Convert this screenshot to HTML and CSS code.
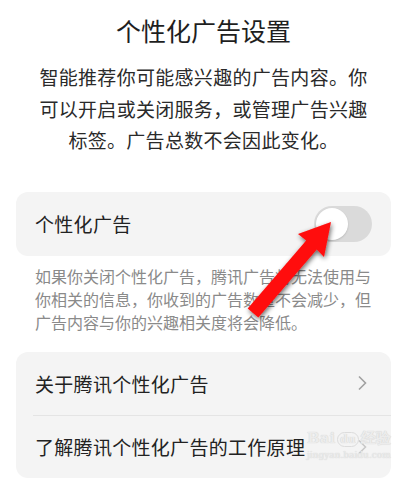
FILE: index.html
```html
<!DOCTYPE html>
<html lang="zh">
<head>
<meta charset="utf-8">
<link rel="stylesheet" href="styles.css">
</head>
<body>
<div class="page">
  <h1 class="title">个性化广告设置</h1>
  <p class="intro">智能推荐你可能感兴趣的广告内容。你可以开启或关闭服务，或管理广告兴趣标签。广告总数不会因此变化。</p>

  <div class="card">
    <div class="row">
      <span class="label">个性化广告</span>
      <span class="switch"><span class="thumb"></span></span>
    </div>
  </div>
  <p class="desc">如果你关闭个性化广告，腾讯广告将无法使用与你相关的信息，你收到的广告数量不会减少，但广告内容与你的兴趣相关度将会降低。</p>

  <div class="card card-list">
    <div class="row row-link">
      <span class="label">关于腾讯个性化广告</span>
      <svg class="chev" width="10" height="16" viewBox="0 0 10 16"><path d="M2 1.5 L8.5 8 L2 14.5" fill="none" stroke="#a0a0a0" stroke-width="1.6"/></svg>
    </div>
    <div class="row row-link">
      <span class="label">了解腾讯个性化广告的工作原理</span>
      <svg class="chev" width="10" height="16" viewBox="0 0 10 16"><path d="M2 1.5 L8.5 8 L2 14.5" fill="none" stroke="#c8c8c8" stroke-width="1.6"/></svg>
    </div>
  </div>

  <div class="watermark">
    <span class="wm-logo">Bai<span class="wm-du">du</span>经验</span>
    <span class="wm-url">jingyan.baidu.com</span>
  </div>

  <svg class="arrow" width="407" height="481" viewBox="0 0 407 481">
    <defs>
      <filter id="sh" x="-20%" y="-20%" width="140%" height="140%">
        <feGaussianBlur in="SourceAlpha" stdDeviation="2.5"/>
        <feOffset dx="1" dy="2" result="b"/>
        <feComponentTransfer><feFuncA type="linear" slope="0.6"/></feComponentTransfer>
        <feMerge><feMergeNode/><feMergeNode in="SourceGraphic"/></feMerge>
      </filter>
    </defs>
    <polygon filter="url(#sh)" fill="#ff0a0a" points="331,222 324,257 316.8,249.5 258.3,317.5 247.7,308.5 306.2,240.5 298,234"/>
  </svg>
</div>
</body>
</html>
```
FILE: styles.css
```css
* { box-sizing: border-box; }
html, body { margin: 0; padding: 0; background: #fff; }
body {
  font-family: "Noto Sans CJK SC", "Noto Sans", sans-serif;
  color: #222;
}
.page {
  position: relative;
  width: 407px;
  height: 481px;
  overflow: hidden;
  padding: 12px 16px 0 16px;
}
.title {
  margin: 0;
  font-size: 25px;
  line-height: 36px;
  font-weight: 400;
  text-align: center;
  color: #1e1e1e;
}
.intro {
  margin: 13px 22px 0 22px;
  font-size: 19px;
  line-height: 31.5px;
  letter-spacing: 0.3px;
  text-align: center;
  color: #2a2a2a;
}
.card {
  margin-top: 36px;
  background: #f4f4f4;
  border-radius: 12px;
}
.row {
  height: 64px;
  display: flex;
  align-items: center;
  justify-content: space-between;
  padding: 0 19px;
}
.label {
  font-size: 19px;
  letter-spacing: 0.3px;
  color: #222;
}
.switch {
  width: 58px;
  height: 36px;
  border-radius: 18px;
  background: #dadada;
  display: flex;
  align-items: center;
  padding-left: 2px;
}
.thumb {
  width: 32px;
  height: 32px;
  border-radius: 50%;
  background: #fff;
  box-shadow: 0 1px 2px rgba(0,0,0,0.15);
}
.desc {
  margin: 9.5px 19px 0 19px;
  font-size: 16px;
  line-height: 23px;
  color: #8a8a8a;
}
.card-list {
  margin-top: 17.5px;
  padding-left: 17px;
}
.card-list .row {
  height: 63px;
  padding-left: 2px;
  padding-right: 24px;
}
.card-list .row + .row {
  border-top: 1px solid #e4e4e4;
}
.chev { display: block; }
.watermark {
  position: absolute;
  left: 307px;
  top: 429px;
  display: flex;
  flex-direction: column;
  align-items: center;
  color: #ececec;
  font-family: "DejaVu Serif", serif;
  text-shadow: 0 0 1px #c4c4c4;
}
.wm-logo { font-size: 15px; line-height: 19px; font-weight: 700; }
.wm-du { font-size: 11px; border: 1px solid #dcdcdc; border-radius: 8px; padding: 0 2px; margin: 0 2px; }
.wm-url { font-size: 9px; line-height: 12px; }
.arrow {
  position: absolute;
  left: 0;
  top: 0;
  pointer-events: none;
}
```
